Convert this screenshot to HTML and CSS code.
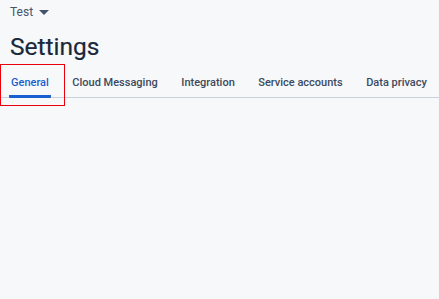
FILE: index.html
```html
<!DOCTYPE html>
<html lang="en">
<head>
    <meta charset="UTF-8">
    <meta name="viewport" content="width=device-width, initial-scale=1.0">
    <title>Settings</title>
    <link rel="stylesheet" href="styles.css">
</head>
<body>
    <header class="page-header">
        <button class="project-picker">
            Test
            <svg class="caret" width="10" height="6" viewBox="0 0 10 6"><path d="M0 0h10L5 5z" fill="currentColor"/></svg>
        </button>
        <h1 class="title">Settings</h1>
        <nav class="tabs">
            <a class="tab active">General</a>
            <a class="tab">Cloud Messaging</a>
            <a class="tab">Integration</a>
            <a class="tab">Service accounts</a>
            <a class="tab">Data privacy</a>
        </nav>
        <div class="highlight"></div>
    </header>
</body>
</html>
```

FILE: styles.css
```css
body {
    margin: 0;
    font-family: Roboto, Arial, sans-serif;
    background-color: #f7f8fa;
    color: #3c4a5c;
    height: 100vh;
}

.page-header {
    position: relative;
    border-bottom: 1px solid #c8d1dc;
}

.project-picker {
    display: flex;
    align-items: center;
    gap: 6px;
    margin: 0;
    padding: 5px 10px 0;
    border: none;
    background: none;
    font-family: inherit;
    font-size: 12px;
    color: #44546a;
    cursor: pointer;
}

.caret {
    margin-top: 1px;
}

.title {
    margin: 14px 0 0 10px;
    font-size: 24.5px;
    font-weight: 400;
    line-height: 28px;
    color: #1a283b;
    -webkit-text-stroke: 0.2px #1a283b;
}

.tabs {
    display: flex;
    margin-top: 7px;
    padding-left: 9px;
    gap: 19.5px;
    white-space: nowrap;
}

.tab {
    padding: 8px 2px 6px;
    font-size: 11px;
    line-height: 13px;
    font-weight: 500;
    color: #3c4a5c;
    border-bottom: 3px solid transparent;
    margin-bottom: -1px;
    cursor: pointer;
}

.tab.active {
    color: #1a5fd0;
    border-bottom-color: #1a5fd0;
    border-radius: 1px;
}

.highlight {
    position: absolute;
    left: 0;
    top: 64px;
    width: 63px;
    height: 40px;
    border: 1px solid #e8000b;
}
```
